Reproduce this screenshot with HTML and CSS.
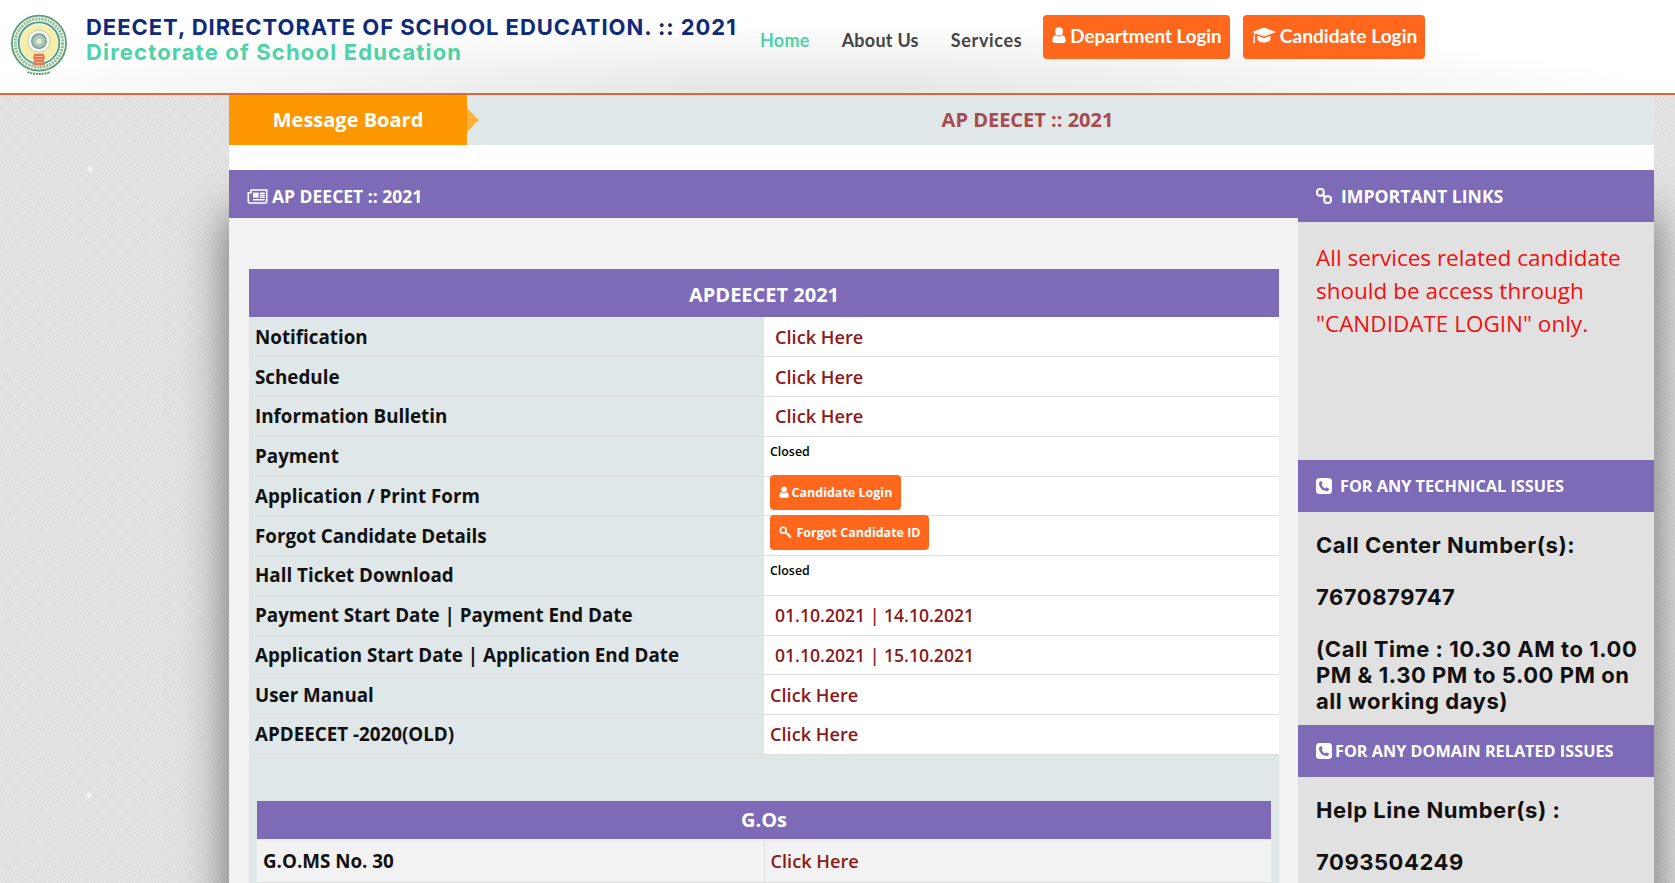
FILE: index.html
```html
<!DOCTYPE html>
<html lang="en">
<head>
<meta charset="utf-8">
<title>DEECET, Directorate of School Education</title>
<link rel="stylesheet" href="styles.css">
</head>
<body>
<header class="topbar">
  <svg class="emblem" viewBox="0 0 60 64" aria-hidden="true">
    <ellipse cx="30" cy="32" rx="29" ry="31" fill="#eef5ea"/>
    <ellipse cx="30" cy="30" rx="28" ry="28.500" fill="none" stroke="#5c9a7c" stroke-width="1.800"/>
    <ellipse cx="30" cy="30" rx="24.500" ry="25" fill="none" stroke="#8dbb98" stroke-width="3" stroke-dasharray="2 1.200"/>
    <ellipse cx="30" cy="30" rx="21" ry="21.500" fill="none" stroke="#4a9a76" stroke-width="1.800"/>
    <circle cx="30" cy="30" r="19" fill="#f8eda8"/>
    <circle cx="30" cy="28" r="11.500" fill="#f7faf0" stroke="#b6d0a8" stroke-width="1"/>
    <circle cx="30" cy="28" r="7.500" fill="#a9c5b4" stroke="#6d9690" stroke-width="1.400"/>
    <circle cx="30" cy="28" r="3" fill="#dfe9dc"/>
    <path d="M25 41h10l1 4-1 3 1 5H24l1-5-1-3z" fill="#e8744a"/>
    <path d="M26 44h8M26 47h8M26 50h8" stroke="#f5c3a6" stroke-width="1"/>
    <path d="M18 60q12 4 24 0" fill="none" stroke="#5c8f6e" stroke-width="2" stroke-dasharray="2 1"/>
  </svg>
  <div class="brand">
    <div class="brand-title">DEECET, DIRECTORATE OF SCHOOL EDUCATION. :: 2021</div>
    <div class="brand-sub">Directorate of School Education</div>
  </div>
  <nav class="nav">
    <a class="nav-link nav-active" href="#">Home</a>
    <a class="nav-link" href="#">About Us</a>
    <a class="nav-link nav-link-last" href="#">Services</a>
    <a class="nav-btn" href="#">
      <svg class="ico-user" viewBox="0 0 14 16" aria-hidden="true"><ellipse cx="7" cy="4.400" rx="3.900" ry="4.200" fill="#fff"/><path d="M0.300 13.200C0.300 10.400 1.600 8.400 3.600 8.200 4.500 9 5.700 9.400 7 9.400s2.500-.4 3.400-1.200c2 .2 3.300 2.200 3.300 5 0 1.700-1 2.800-2.400 2.800H2.700C1.300 16 .3 14.900.3 13.200z" fill="#fff"/></svg>
      Department Login</a>
    <a class="nav-btn nav-btn-second" href="#">
      <svg class="ico-cap" viewBox="0 0 24 16" aria-hidden="true"><path d="M12 0.500 24 5 12 9.500 3.800 6.400C3 7.200 2.600 8.300 2.500 9.600 2.900 9.900 3.100 10.300 3.100 10.700 3.100 11.100 2.900 11.500 2.600 11.700L3.200 16H1L1.600 11.700C1.300 11.500 1.100 11.100 1.100 10.700 1.100 10.300 1.300 9.900 1.700 9.600 1.800 8 2.200 6.800 2.900 5.900L0 5z" fill="#fff"/><path d="M5.600 8.800 12 11.200 18.400 8.800V12.200C18.400 14 15.500 15.400 12 15.400S5.600 14 5.600 12.200z" fill="#fff"/></svg>
      Candidate Login</a>
  </nav>
</header>

<main class="wrap">
  <div class="board">
    <div class="board-label">Message Board</div>
    <div class="board-text">AP DEECET :: 2021</div>
  </div>
  <div class="spacer"></div>
  <div class="panels">
    <section class="content">
      <h2 class="content-head">
        <svg class="ico-news" viewBox="0 0 20 15" aria-hidden="true"><path d="M3.500 1H19.200V12.700C19.200 13.500 18.600 14 17.900 14H2C1.300 14 .8 13.500 .8 12.700V3.800H3.500z" fill="none" stroke="#fff" stroke-width="1.600"/><path d="M5.500 3.600h5.500v5H5.500z" fill="#fff"/><path d="M12.300 4.200H17.200M12.300 6.200H17.200M12.300 8.200H17.200M5.500 10.700H17.200" fill="none" stroke="#fff" stroke-width="1.400"/></svg>
        AP DEECET :: 2021</h2>
      <div class="content-body">
        <table class="info">
          <thead><tr><th colspan="2">APDEECET 2021</th></tr></thead>
          <tbody>
            <tr><td class="lbl">Notification</td><td class="val val-in"><a href="#">Click Here</a></td></tr>
            <tr><td class="lbl">Schedule</td><td class="val val-in"><a href="#">Click Here</a></td></tr>
            <tr><td class="lbl">Information Bulletin</td><td class="val val-in"><a href="#">Click Here</a></td></tr>
            <tr><td class="lbl">Payment</td><td class="val val-top"><span class="closed">Closed</span></td></tr>
            <tr><td class="lbl">Application / Print Form</td><td class="val val-top"><a class="mini-btn" href="#"><svg class="ico-mini" viewBox="0 0 14 16" aria-hidden="true"><ellipse cx="7" cy="4.400" rx="3.900" ry="4.200" fill="#fff"/><path d="M0.300 13.200C0.300 10.400 1.600 8.400 3.600 8.200 4.500 9 5.700 9.400 7 9.400s2.500-.4 3.400-1.200c2 .2 3.300 2.200 3.300 5 0 1.700-1 2.800-2.400 2.800H2.700C1.300 16 .3 14.900.3 13.200z" fill="#fff"/></svg>Candidate Login</a></td></tr>
            <tr><td class="lbl">Forgot Candidate Details</td><td class="val val-top"><a class="mini-btn mini-btn-low" href="#"><svg class="ico-key" viewBox="0 0 16 16" aria-hidden="true"><circle cx="5.200" cy="5.200" r="3.600" fill="none" stroke="#fff" stroke-width="2"/><path d="M8 8l6.500 6.500M11 11l1.800-1.500M13 13l1.500-1.300" fill="none" stroke="#fff" stroke-width="2"/></svg>Forgot Candidate ID</a></td></tr>
            <tr><td class="lbl">Hall Ticket Download</td><td class="val val-top"><span class="closed">Closed</span></td></tr>
            <tr><td class="lbl">Payment Start Date | Payment End Date</td><td class="val val-in"><span class="date">01.10.2021 | 14.10.2021</span></td></tr>
            <tr><td class="lbl">Application Start Date | Application End Date</td><td class="val val-in"><span class="date">01.10.2021 | 15.10.2021</span></td></tr>
            <tr><td class="lbl">User Manual</td><td class="val"><a href="#">Click Here</a></td></tr>
            <tr><td class="lbl">APDEECET -2020(OLD)</td><td class="val"><a href="#">Click Here</a></td></tr>
            <tr>
              <td class="nest-cell" colspan="2">
                <table class="gos">
                  <thead><tr><th colspan="2">G.Os</th></tr></thead>
                  <tbody>
                    <tr><td class="go-lbl">G.O.MS No. 30</td><td class="go-val"><a href="#">Click Here</a></td></tr>
                  </tbody>
                </table>
              </td>
            </tr>
          </tbody>
        </table>
      </div>
    </section>
    <aside class="side">
      <h3 class="side-head side-head-links">
        <svg class="ico-link" viewBox="0 0 16 16" aria-hidden="true"><g fill="none" stroke="#fff" stroke-width="2"><rect x="1" y="1" width="6.800" height="6.800" rx="3"/><rect x="8.200" y="8.200" width="6.800" height="6.800" rx="3"/><path d="M6 6l4 4"/></g></svg>
        IMPORTANT LINKS</h3>
      <div class="side-notice">All services related candidate should be access through "CANDIDATE LOGIN" only.</div>
      <h3 class="side-head">
        <svg class="ico-phone" viewBox="0 0 16 16" aria-hidden="true"><rect width="16" height="16" rx="3.500" fill="#fff"/><path d="M4.800 3C3.800 3.400 3 4.300 3 5.500 3 9.300 6.700 13 10.500 13 11.700 13 12.600 12.200 13 11.200 13.100 10.900 13 10.700 12.800 10.600L10.700 9.500C10.500 9.400 10.300 9.400 10.100 9.600L9.300 10.500C7.900 9.900 6.100 8.100 5.500 6.700L6.400 5.900C6.600 5.700 6.600 5.500 6.500 5.300L5.400 3.200C5.300 3 5.100 2.900 4.800 3z" fill="#7e6bb8"/></svg>
        FOR ANY TECHNICAL ISSUES</h3>
      <div class="side-info side-info-tech">
        <p class="info-line">Call Center Number(s):</p>
        <p class="info-line">7670879747</p>
        <p class="info-line">(Call Time : 10.30 AM to 1.00 PM &amp; 1.30 PM to 5.00 PM on all working days)</p>
      </div>
      <h3 class="side-head side-head-tight">
        <svg class="ico-phone" viewBox="0 0 16 16" aria-hidden="true"><rect width="16" height="16" rx="3.500" fill="#fff"/><path d="M4.800 3C3.800 3.400 3 4.300 3 5.500 3 9.300 6.700 13 10.500 13 11.700 13 12.600 12.200 13 11.200 13.100 10.900 13 10.700 12.800 10.600L10.700 9.500C10.500 9.400 10.300 9.400 10.100 9.600L9.300 10.500C7.900 9.900 6.100 8.100 5.500 6.700L6.400 5.900C6.600 5.700 6.600 5.500 6.500 5.300L5.400 3.200C5.300 3 5.100 2.900 4.800 3z" fill="#7e6bb8"/></svg>
        FOR ANY DOMAIN RELATED ISSUES</h3>
      <div class="side-info">
        <p class="info-line">Help Line Number(s) :</p>
        <p class="info-line">7093504249</p>
      </div>
    </aside>
  </div>
</main>
</body>
</html>
```
FILE: styles.css
```css
* { box-sizing: border-box; }
html, body { height: 883px; overflow: hidden; }
body {
  margin: 0;
  font-family: "Open Sans", sans-serif;
  color: #111;
  background-color: #dedede;
  background-image:
    radial-gradient(circle 4px at 90px 169px, #fff, transparent),
    radial-gradient(circle 4px at 89px 795px, #fff, transparent),
    repeating-linear-gradient(45deg, rgba(255,255,255,.16) 0 1px, transparent 1px 3px),
    repeating-linear-gradient(-45deg, rgba(255,255,255,.16) 0 1px, transparent 1px 3px);
}
a { text-decoration: none; }

.topbar {
  height: 95px;
  display: flex;
  align-items: flex-start;
  border-bottom: 2px solid #d96a38;
  background: radial-gradient(ellipse 52% 75% at 48% 100%, #e4e4e4, rgba(255,255,255,0)), #fff;
}
.emblem { width: 58px; height: 62px; margin: 14px 0 0 10px; flex: none; }
.brand { margin: 15px 0 0 18px; width: 674px; flex: none; }
.brand-title {
  font-family: Inter, sans-serif;
  font-weight: 700;
  font-size: 22px;
  letter-spacing: .95px;
  line-height: 25px;
  color: #0f2a78;
  white-space: nowrap;
}
.brand-sub {
  font-family: Inter, sans-serif;
  font-weight: 700;
  font-size: 22px;
  letter-spacing: 1.170px;
  line-height: 25px;
  color: #4ed3a8;
  white-space: nowrap;
}
.nav { display: flex; align-items: flex-start; margin-top: 15px; }
.nav-link {
  font-family: Lato, sans-serif;
  font-weight: 700;
  font-size: 18px;
  letter-spacing: .25px;
  line-height: 22px;
  color: #444;
  margin: 14px 32px 0 0;
  white-space: nowrap;
}
.nav-link-last { margin-right: 21px; letter-spacing: .65px; }
.nav-active { color: #4ed3a8; }
.nav-btn {
  display: flex;
  align-items: center;
  gap: 4px;
  height: 44px;
  padding: 0 8px 4px 9px;
  border-radius: 4px;
  background: #ff671d;
  color: #fff;
  font-family: Lato, sans-serif;
  font-weight: 700;
  font-size: 18.800px;
  white-space: nowrap;
}
.nav-btn-second { margin-left: 13px; font-size: 19.200px; }
.ico-user { width: 14px; height: 16px; }
.ico-cap { width: 24px; height: 16px; }

.wrap { width: 1425px; margin-left: 229px; }
.board { height: 50px; display: flex; align-items: center; background: #dfe7e8; }
.board-label {
  position: relative;
  width: 238px;
  height: 50px;
  background: #ff9800;
  color: #fff;
  font-weight: 700;
  font-size: 20px;
  line-height: 50px;
  text-align: center;
}
.board-label::after {
  content: "";
  position: absolute;
  left: 100%;
  top: 13px;
  border-left: 12px solid #ffb13c;
  border-top: 12px solid transparent;
  border-bottom: 12px solid transparent;
}
.board-text {
  flex: 1;
  padding: 0 66px 2px 0;
  text-align: center;
  font-weight: 700;
  font-size: 20px;
  color: #a94a4f;
}
.spacer { height: 25px; background: #fff; }
.panels { display: flex; box-shadow: 0 44px 44px rgba(0,0,0,.55); }

.content { width: 1069px; background: #f2f2f2; }
.content-head {
  display: flex;
  align-items: center;
  gap: 4px;
  height: 48px;
  margin: 0;
  padding: 4px 0 0 18px;
  background: #7e6bb8;
  color: #fff;
  font-size: 17.500px;
  font-weight: 700;
}
.ico-news { width: 21px; height: 15px; }
.content-body { padding: 51px 19px 0 20px; }

.info, .gos { width: 100%; border-collapse: collapse; table-layout: fixed; }
.info { background: #dfe7e8; }
.info th, .gos th { background: #7e6bb8; color: #fff; font-weight: 700; text-align: center; }
.info th { height: 48px; padding-top: 4px; font-size: 20px; }
.lbl, .val { height: 39.750px; border-bottom: 1px solid #ddd; vertical-align: middle; }
.lbl {
  padding: 0 0 0 6px;
  font-size: 18.800px;
  font-weight: 700;
  color: #111;
}
.val { padding: 0 0 0 6px; background: #fff; }
.val a, .go-val a { font-size: 18.200px; font-weight: 600; color: #8b1a1a; }
.date { font-size: 17.600px; font-weight: 600; color: #8b1a1a; }
.val-in { padding-left: 11px; }
.val-top { vertical-align: top; }
.closed { display: block; padding-top: 5px; font-size: 12.400px; font-weight: 600; line-height: 20px; color: #000; }
.val a.mini-btn {
  display: inline-flex;
  align-items: center;
  gap: 3px;
  height: 35px;
  margin-top: -2px;
  padding: 0 8.500px;
  border-radius: 4px;
  background: #ff671d;
  color: #fff;
  font-size: 12.500px;
  font-weight: 700;
  vertical-align: top;
}
.val a.mini-btn-low { margin-top: -1px; }
.ico-mini { width: 10px; height: 12px; }
.ico-key { width: 13px; height: 13px; margin-right: 2px; }

.nest-cell { padding: 46px 8px 0 8px; }
.gos th { height: 39px; padding-bottom: 4px; font-size: 20px; }
.go-lbl, .go-val { height: 43px; background: #f2f2f2; border-top: 2px solid #e8ecec; border-bottom: 2px solid #ddd; }
.go-lbl { padding-left: 6px; font-size: 18.800px; font-weight: 700; }
.go-val { padding-left: 6px; border-left: 1px solid #ddd; }

.side { width: 356px; background: #e1e1e1; }
.side-head {
  display: flex;
  align-items: center;
  gap: 8px;
  height: 52px;
  margin: 0;
  padding-left: 18px;
  background: #7e6bb8;
  color: #fff;
  font-size: 16.250px;
  font-weight: 700;
}
.side-head-links { font-size: 17.650px; gap: 9px; }
.side-head-tight { gap: 3px; }
.ico-link { width: 16px; height: 16px; }
.ico-phone { width: 16px; height: 16px; }
.side-notice {
  height: 238px;
  padding: 19px 18px 0;
  font-size: 22.500px;
  line-height: 33px;
  color: #f01010;
}
.side-info {
  padding: 20px 8px 10px 18px;
  height: 213px;
  font-family: Inter, sans-serif;
  font-size: 22px;
  font-weight: 700;
  letter-spacing: .55px;
  line-height: 26px;
  color: #111;
}
.info-line { margin: 0 0 26px; }
.info-line:last-child { margin-bottom: 0; }
```
